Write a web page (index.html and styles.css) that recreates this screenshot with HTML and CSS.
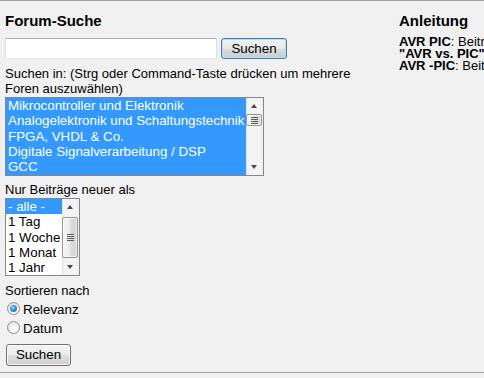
FILE: index.html
```html
<!DOCTYPE html>
<html lang="de">
<head>
<meta charset="utf-8">
<title>Forum-Suche</title>
<link rel="stylesheet" href="styles.css">
</head>
<body>
<div class="page">
  <div class="main">
    <form class="left">
      <h2 class="title">Forum-Suche</h2>
      <div class="searchrow">
        <input class="q" type="text" aria-label="Suchbegriff">
        <button class="btn btn-default" type="button">Suchen</button>
      </div>
      <p class="label label-in">Suchen in: (Strg oder Command-Taste drücken um mehrere Foren auszuwählen)</p>
      <div class="listbox lb-forums" role="listbox" aria-multiselectable="true">
        <ul class="opts">
          <li class="opt sel">Mikrocontroller und Elektronik</li>
          <li class="opt sel">Analogelektronik und Schaltungstechnik</li>
          <li class="opt sel">FPGA, VHDL &amp; Co.</li>
          <li class="opt sel">Digitale Signalverarbeitung / DSP</li>
          <li class="opt sel">GCC</li>
        </ul>
        <div class="sb">
          <span class="sb-btn sb-up"></span>
          <span class="sb-track"><span class="sb-thumb thumb-small"><span class="grip"></span></span></span>
          <span class="sb-btn sb-down"></span>
        </div>
      </div>
      <p class="label label-age">Nur Beiträge neuer als</p>
      <div class="listbox lb-age" role="listbox">
        <ul class="opts">
          <li class="opt sel">- alle -</li>
          <li class="opt">1 Tag</li>
          <li class="opt">1 Woche</li>
          <li class="opt">1 Monat</li>
          <li class="opt">1 Jahr</li>
        </ul>
        <div class="sb">
          <span class="sb-btn sb-up"></span>
          <span class="sb-track"><span class="sb-thumb thumb-big"><span class="grip"></span></span></span>
          <span class="sb-btn sb-down"></span>
        </div>
      </div>
      <p class="label label-sort">Sortieren nach</p>
      <div class="radios">
        <label class="radio"><span class="rb checked"></span><span class="rtext">Relevanz</span></label>
        <label class="radio"><span class="rb"></span><span class="rtext">Datum</span></label>
      </div>
      <button class="btn btn-bottom" type="button">Suchen</button>
    </form>
    <div class="right">
      <h2 class="title title-help">Anleitung</h2>
      <div class="help">
        <div class="hl"><b>AVR PIC</b>: Beiträge, die AVR und PIC enthalten</div>
        <div class="hl"><b>"AVR vs. PIC"</b>: Beiträge, die genau diese Phrase enthalten</div>
        <div class="hl"><b>AVR -PIC</b>: Beiträge, die AVR aber nicht PIC enthalten</div>
      </div>
    </div>
  </div>
</div>
</body>
</html>
```

FILE: styles.css
```css
html, body {
  margin: 0;
  padding: 0;
}
body {
  background: #f0f0f0;
  font-family: "Liberation Sans", Arial, sans-serif;
  font-size: 13px;
  color: #000;
  overflow: hidden;
  width: 484px;
  height: 378px;
}
.page {
  border-top: 1px solid #a0a0a0;
  border-bottom: 1px solid #a0a0a0;
  height: 371px;
  overflow: hidden;
}
.main {
  display: flex;
}
.left {
  flex: 0 0 394px;
  box-sizing: border-box;
  padding-left: 5px;
  padding-right: 22px;
  margin: 0;
}
.right {
  flex: 0 0 auto;
  padding-left: 5px;
  white-space: nowrap;
}
.title {
  font-size: 15px;
  font-weight: bold;
  line-height: 17px;
  margin: 11px 0 9px 0;
}
.title-help {
  margin-bottom: 6px;
}
.searchrow {
  display: flex;
  align-items: flex-start;
}
.q {
  box-sizing: border-box;
  width: 212px;
  height: 21px;
  margin: 0;
  padding: 1px 3px;
  border: 1px solid;
  border-color: #abadb3 #dbdfe6 #e3e9ef #e2e3ea;
  background: #fff;
  font: 13px "Liberation Sans", Arial, sans-serif;
  outline: none;
}
.btn {
  box-sizing: border-box;
  margin: 0;
  padding: 0;
  border: 1px solid #707070;
  border-radius: 3px;
  background: linear-gradient(#f2f2f2 0%, #ebebeb 50%, #dddddd 51%, #cfcfcf 100%);
  box-shadow: inset 0 0 0 1px rgba(255,255,255,0.75);
  font: 13.33px "Liberation Sans", Arial, sans-serif;
  color: #000;
  line-height: 18px;
}
.btn-default {
  width: 66px;
  height: 21px;
  margin-left: 4px;
  border-color: #3c7fb1;
  box-shadow: inset 0 0 0 1px #b9dcf2;
  background: linear-gradient(#f0f0f0 0%, #e8e8e8 50%, #dadada 51%, #cdcdcd 100%);
}
.btn-bottom {
  display: block;
  width: 65px;
  height: 22px;
  margin: 4px 0 0 1px;
}
.label {
  margin: 0;
  line-height: 15px;
}
.label-in {
  margin-top: 7px;
  margin-bottom: 1px;
}
.label-age {
  margin-top: 6px;
  margin-bottom: 1px;
}
.label-sort {
  margin-top: 7px;
  margin-bottom: 4px;
}
.listbox {
  box-sizing: border-box;
  display: flex;
  border: 1px solid #828790;
  background: #fff;
  overflow: hidden;
}
.lb-forums {
  width: 259px;
  height: 79px;
}
.lb-age {
  width: 75px;
  height: 78px;
}
.opts {
  flex: 1 1 auto;
  list-style: none;
  margin: 0;
  padding: 0;
  overflow: hidden;
}
.opt {
  font-size: 13.33px;
  line-height: 15.33px;
  padding-left: 2px;
  white-space: nowrap;
  overflow: hidden;
}
.opt.sel {
  background: #3399ff;
  color: #fff;
}
.sb {
  flex: 0 0 17px;
  display: flex;
  flex-direction: column;
  background: linear-gradient(to right, #e3e3e3 0, #f2f2f2 2px, #f4f4f4 14px, #ececec 17px);
}
.sb-btn {
  flex: 0 0 16px;
  position: relative;
}
.sb-btn::after {
  content: "";
  position: absolute;
  left: 5px;
  width: 0;
  height: 0;
  border-left: 3.5px solid transparent;
  border-right: 3.5px solid transparent;
}
.sb-up::after {
  top: 6px;
  border-bottom: 4px solid #4a4a4a;
}
.sb-down::after {
  top: 6px;
  border-top: 4px solid #4a4a4a;
}
.sb-track {
  flex: 1 1 auto;
  position: relative;
}
.sb-thumb {
  position: absolute;
  left: 0;
  right: 1px;
  box-sizing: border-box;
  border: 1px solid #979797;
  border-radius: 2px;
  background: linear-gradient(to right, #f5f5f5 0%, #ececec 45%, #dcdcdc 55%, #d2d2d2 100%);
  box-shadow: inset 0 0 0 1px rgba(255,255,255,0.6);
  display: flex;
  align-items: center;
  justify-content: center;
}
.thumb-small {
  top: 0;
  height: 12px;
}
.thumb-big {
  top: 2px;
  height: 41px;
}
.grip {
  width: 7px;
  height: 7px;
  background: repeating-linear-gradient(#5c5c5c 0, #5c5c5c 1px, transparent 1px, transparent 2px);
}
.radios {
  display: flex;
  flex-direction: column;
}
.radio {
  display: flex;
  align-items: flex-start;
  height: 19px;
  line-height: 15px;
  font-size: 13.33px;
}
.rb {
  box-sizing: border-box;
  width: 13px;
  height: 13px;
  margin-left: 2px;
  margin-right: 3px;
  border: 1px solid #8f8f8f;
  border-radius: 50%;
  background: radial-gradient(circle at 60% 65%, #ffffff 0%, #f0f0f0 45%, #d4d4d4 100%);
  position: relative;
}
.rb.checked::after {
  content: "";
  position: absolute;
  left: 2px;
  top: 2px;
  width: 7px;
  height: 7px;
  border-radius: 50%;
  background: radial-gradient(circle at 40% 35%, #a7dcff 0%, #3c9ee0 35%, #1b5d9a 100%);
}
.rtext {
  display: block;
}
.help {
  font-size: 13px;
  margin-top: 0;
}
.hl {
  height: 12px;
  line-height: 14px;
}
.help b {
  font-weight: bold;
}
```
